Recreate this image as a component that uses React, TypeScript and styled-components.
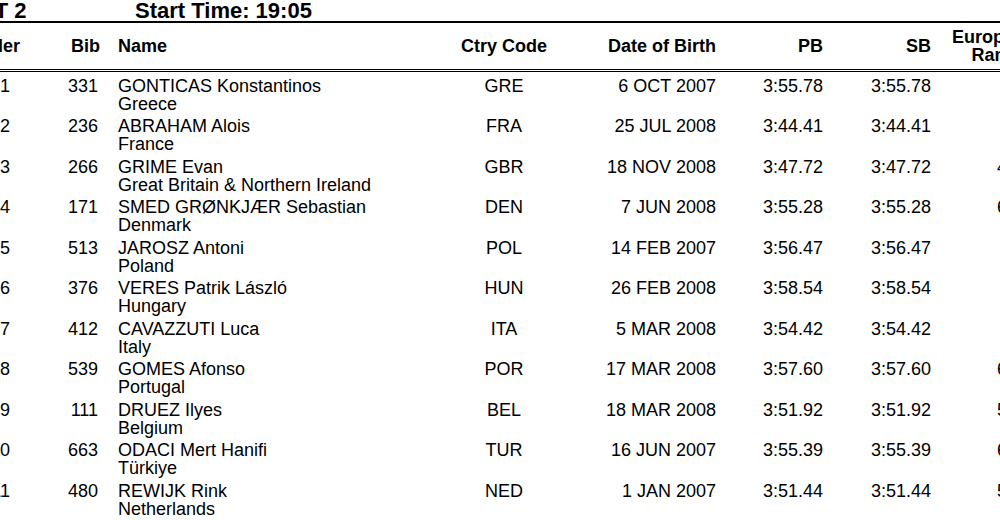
import React from "react";
import styled, { createGlobalStyle } from "styled-components";

const GlobalStyle = createGlobalStyle`
    html, body {
        margin: 0;
        padding: 0;
        background: #ffffff;
        overflow: hidden;
    }
    body {
        font-family: "Liberation Sans", Arial, Helvetica, sans-serif;
        color: #000000;
    }
`;

// the sheet is wider than the window: it starts left of the visible edge
const Sheet = styled.div`
    width: 1120px;
    margin-left: -50px;
`;

const HeatBar = styled.div`
    display: flex;
    font-size: 22px;
    font-weight: 700;
    line-height: 21px;
    border-bottom: 2px solid #000;
`;

const HeatLabel = styled.div`
    width: 185px;
`;

const COLUMNS = "70px 80px 340px 128px 148px 107px 108px 139px";

const HeaderRow = styled.div`
    display: grid;
    grid-template-columns: ${COLUMNS};
    align-items: center;
    height: 46px;
    border-bottom: 3px double #000;
    font-size: 18px;
    font-weight: 700;
    line-height: 18px;
`;

const Row = styled.div`
    display: grid;
    grid-template-columns: ${COLUMNS};
    align-items: start;
    height: 40.5px;
    padding-top: 4.5px;
    box-sizing: border-box;
    font-size: 18px;
    line-height: 18px;
`;

const Cell = styled.div<{ $align?: "left" | "right" | "center"; $padRight?: number; $padLeft?: number }>`
    text-align: ${(p) => p.$align || "left"};
    padding-right: ${(p) => p.$padRight || 0}px;
    padding-left: ${(p) => p.$padLeft || 0}px;
    white-space: nowrap;
`;

type Athlete = {
    order: number;
    bib: string;
    name: string;
    country: string;
    code: string;
    dob: string;
    pb: string;
    sb: string;
    rank: string;
};

const athletes: Athlete[] = [
    { order: 1, bib: "331", name: "GONTICAS Konstantinos", country: "Greece", code: "GRE", dob: "6 OCT 2007", pb: "3:55.78", sb: "3:55.78", rank: "" },
    { order: 2, bib: "236", name: "ABRAHAM Alois", country: "France", code: "FRA", dob: "25 JUL 2008", pb: "3:44.41", sb: "3:44.41", rank: "" },
    { order: 3, bib: "266", name: "GRIME Evan", country: "Great Britain & Northern Ireland", code: "GBR", dob: "18 NOV 2008", pb: "3:47.72", sb: "3:47.72", rank: "41" },
    { order: 4, bib: "171", name: "SMED GRØNKJÆR Sebastian", country: "Denmark", code: "DEN", dob: "7 JUN 2008", pb: "3:55.28", sb: "3:55.28", rank: "63" },
    { order: 5, bib: "513", name: "JAROSZ Antoni", country: "Poland", code: "POL", dob: "14 FEB 2007", pb: "3:56.47", sb: "3:56.47", rank: "" },
    { order: 6, bib: "376", name: "VERES Patrik László", country: "Hungary", code: "HUN", dob: "26 FEB 2008", pb: "3:58.54", sb: "3:58.54", rank: "" },
    { order: 7, bib: "412", name: "CAVAZZUTI Luca", country: "Italy", code: "ITA", dob: "5 MAR 2008", pb: "3:54.42", sb: "3:54.42", rank: "" },
    { order: 8, bib: "539", name: "GOMES Afonso", country: "Portugal", code: "POR", dob: "17 MAR 2008", pb: "3:57.60", sb: "3:57.60", rank: "64" },
    { order: 9, bib: "111", name: "DRUEZ Ilyes", country: "Belgium", code: "BEL", dob: "18 MAR 2008", pb: "3:51.92", sb: "3:51.92", rank: "52" },
    { order: 10, bib: "663", name: "ODACI Mert Hanifi", country: "Türkiye", code: "TUR", dob: "16 JUN 2007", pb: "3:55.39", sb: "3:55.39", rank: "66" },
    { order: 11, bib: "480", name: "REWIJK Rink", country: "Netherlands", code: "NED", dob: "1 JAN 2007", pb: "3:51.44", sb: "3:51.44", rank: "54" },
];

const App: React.FC = () => {
    return (
        <>
            <GlobalStyle />
            <Sheet>
                <HeatBar>
                    <HeatLabel>HEAT 2</HeatLabel>
                    <div>Start Time: 19:05</div>
                </HeatBar>

                <HeaderRow>
                    <Cell $align="right" $padRight={0}>Order</Cell>
                    <Cell $align="right">Bib</Cell>
                    <Cell $padLeft={18}>Name</Cell>
                    <Cell $align="center">Ctry Code</Cell>
                    <Cell $align="right">Date of Birth</Cell>
                    <Cell $align="right">PB</Cell>
                    <Cell $align="right">SB</Cell>
                    <Cell $align="center" $padRight={14}>
                        European
                        <br />
                        Rank
                    </Cell>
                </HeaderRow>

                {athletes.map((a) => (
                    <Row key={a.order}>
                        <Cell $align="right" $padRight={10}>{a.order}</Cell>
                        <Cell $align="right" $padRight={2}>{a.bib}</Cell>
                        <Cell $padLeft={18}>
                            {a.name}
                            <br />
                            {a.country}
                        </Cell>
                        <Cell $align="center">{a.code}</Cell>
                        <Cell $align="right">{a.dob}</Cell>
                        <Cell $align="right">{a.pb}</Cell>
                        <Cell $align="right">{a.sb}</Cell>
                        <Cell $padLeft={66}>{a.rank}</Cell>
                    </Row>
                ))}
            </Sheet>
        </>
    );
};

export default App;
